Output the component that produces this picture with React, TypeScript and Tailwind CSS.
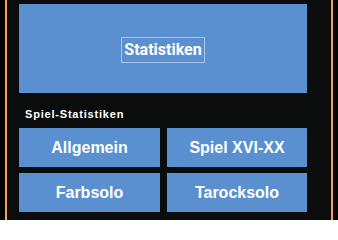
const tiles = ['Allgemein', 'Spiel XVI-XX', 'Farbsolo', 'Tarocksolo'];

export default function App() {
  return (
    <div className="h-[220px] w-[338px] overflow-hidden bg-[#050505] pl-[5px]">
      <div className="h-full w-[328px] border-x-2 border-[#f2a257] bg-[#0b0d0c] pl-[12px] pr-[24px] pt-[4px]">
        <div className="flex h-[89px] items-center justify-center bg-[#5a8fd0]">
          <span
            className="mt-[3px] border border-[#a9c6ea] px-[2px] py-[3px] text-[16px] font-bold leading-[18px] text-white"
            style={{ fontFamily: 'Roboto, "Liberation Sans", sans-serif' }}
          >
            Statistiken
          </span>
        </div>
        <div
          className="pl-[6px] pt-[14px] text-[11px] font-bold leading-[14px] tracking-[0.8px] text-white"
          style={{ fontFamily: '"Liberation Sans", Arial, sans-serif' }}
        >
          Spiel-Statistiken
        </div>
        <div className="mt-[7px] grid grid-cols-[141px_140px] gap-x-[7px] gap-y-[6px]">
          {tiles.map((label) => (
            <div
              key={label}
              className="flex h-[39px] items-center justify-center bg-[#5a8fd0] text-[16px] font-bold text-white"
              style={{ fontFamily: '"Liberation Sans", Arial, sans-serif' }}
            >
              {label}
            </div>
          ))}
        </div>
      </div>
    </div>
  );
}
